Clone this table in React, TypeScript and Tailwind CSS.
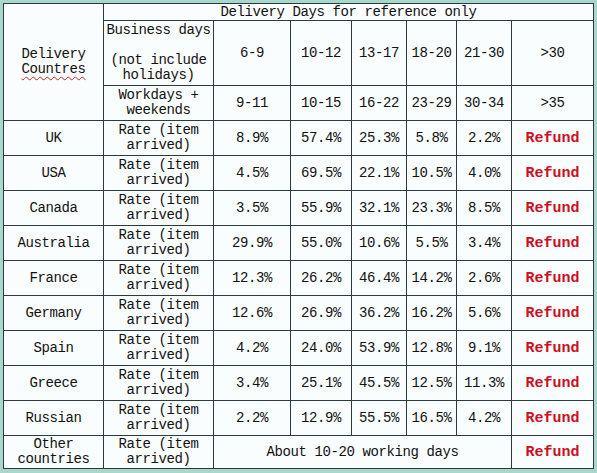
import { FC, ReactNode } from "react";

interface IRow {
  country: ReactNode;
  rates: string[];
}

const rows: IRow[] = [
  { country: "UK", rates: ["8.9%", "57.4%", "25.3%", "5.8%", "2.2%"] },
  { country: "USA", rates: ["4.5%", "69.5%", "22.1%", "10.5%", "4.0%"] },
  { country: "Canada", rates: ["3.5%", "55.9%", "32.1%", "23.3%", "8.5%"] },
  { country: "Australia", rates: ["29.9%", "55.0%", "10.6%", "5.5%", "3.4%"] },
  { country: "France", rates: ["12.3%", "26.2%", "46.4%", "14.2%", "2.6%"] },
  { country: "Germany", rates: ["12.6%", "26.9%", "36.2%", "16.2%", "5.6%"] },
  { country: "Spain", rates: ["4.2%", "24.0%", "53.9%", "12.8%", "9.1%"] },
  { country: "Greece", rates: ["3.4%", "25.1%", "45.5%", "12.5%", "11.3%"] },
  { country: "Russian", rates: ["2.2%", "12.9%", "55.5%", "16.5%", "4.2%"] },
];

const cell = "border border-[#2c3c3c] text-center align-middle px-[2px] p-0";

const Rate: FC = () => (
  <td className={cell}>
    Rate (item
    <br />
    arrived)
  </td>
);

const Refund: FC = () => (
  <td className={`${cell} font-bold text-[15px] text-[#cc1024] tracking-normal`}>
    Refund
  </td>
);

export default function App() {
  return (
    <div className="w-[597px] h-[473px] bg-[#a9d6cd] p-[3px]">
      <table
        className="w-[590px] h-[466px] table-fixed border-collapse bg-[#fafdfd] text-[#111] text-[14px] leading-[15px] tracking-[-0.4px]"
        style={{ fontFamily: '"Liberation Mono", monospace' }}
      >
        <colgroup>
          <col className="w-[100px]" />
          <col className="w-[110px]" />
          <col className="w-[77px]" />
          <col className="w-[61px]" />
          <col className="w-[55px]" />
          <col className="w-[50px]" />
          <col className="w-[55px]" />
          <col className="w-[82px]" />
        </colgroup>
        <tbody>
          <tr className="h-[17px]">
            <td className={cell} rowSpan={3}>
              Delivery
              <br />
              <span className="underline decoration-wavy decoration-[#d02020] decoration-1 underline-offset-[3px]">
                Countres
              </span>
            </td>
            <td className={cell} colSpan={7}>
              Delivery Days for reference only
            </td>
          </tr>
          <tr className="h-[65px]">
            <td className={cell}>
              Business days
              <br />
              <br />
              (not include
              <br />
              holidays)
            </td>
            <td className={cell}>6-9</td>
            <td className={cell}>10-12</td>
            <td className={cell}>13-17</td>
            <td className={cell}>18-20</td>
            <td className={cell}>21-30</td>
            <td className={cell}>&gt;30</td>
          </tr>
          <tr className="h-[35px]">
            <td className={cell}>
              Workdays +
              <br />
              weekends
            </td>
            <td className={cell}>9-11</td>
            <td className={cell}>10-15</td>
            <td className={cell}>16-22</td>
            <td className={cell}>23-29</td>
            <td className={cell}>30-34</td>
            <td className={cell}>&gt;35</td>
          </tr>
          {rows.map((row, i) => (
            <tr key={i} className="h-[35px]">
              <td className={cell}>{row.country}</td>
              <Rate />
              {row.rates.map((rate, j) => (
                <td key={j} className={cell}>
                  {rate}
                </td>
              ))}
              <Refund />
            </tr>
          ))}
          <tr className="h-[33px]">
            <td className={cell}>
              Other
              <br />
              countries
            </td>
            <Rate />
            <td className={cell} colSpan={5}>
              About 10-20 working days
            </td>
            <Refund />
          </tr>
        </tbody>
      </table>
    </div>
  );
}
